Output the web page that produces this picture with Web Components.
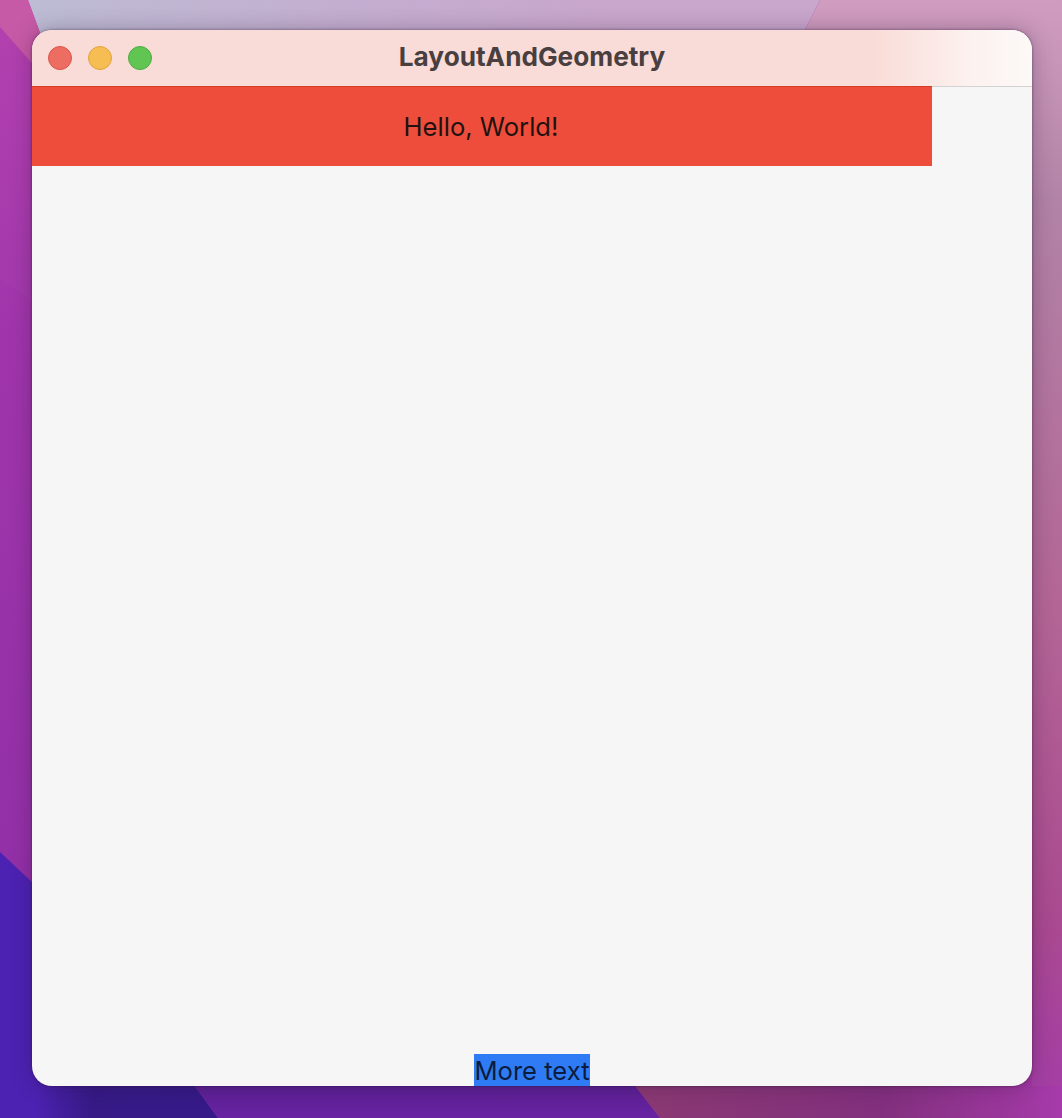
<!DOCTYPE html>
<html>
<head>
<meta charset="utf-8">
<title>LayoutAndGeometry</title>
<style>
  html, body { margin: 0; height: 100%; }
  body { overflow: hidden; background: #8a2ea5; }
</style>
</head>
<body>
<mac-desktop>
  <mac-window name="LayoutAndGeometry">
    <color-label color="#ee4d3b" ink="#1f1210" class="hello">Hello, World!</color-label>
    <color-label color="#2f7bf6" ink="#0c1c3c" class="more">More text</color-label>
  </mac-window>
</mac-desktop>
<script>
class MacDesktop extends HTMLElement {
  constructor() {
    super();
    this.attachShadow({ mode: 'open' });
    this.shadowRoot.innerHTML = `
    <style>
      :host {
        display: block;
        position: relative;
        width: 1062px;
        height: 1118px;
        padding: 30px 30px 32px 32px;
        box-sizing: border-box;
        overflow: hidden;
      }
      svg {
        position: absolute;
        inset: 0;
      }
      .front {
        position: relative;
        height: 100%;
      }
    </style>
    <svg width="1062" height="1118" viewBox="0 0 1062 1118" aria-hidden="true">
      <defs>
        <linearGradient id="sky" x1="0" y1="0" x2="1" y2="0">
          <stop offset="0" stop-color="#bdbcd4"/>
          <stop offset=".4" stop-color="#c4aed0"/>
          <stop offset=".75" stop-color="#c9a6cc"/>
          <stop offset="1" stop-color="#c9a6cc"/>
        </linearGradient>
        <linearGradient id="rose" x1="0" y1="0" x2="0" y2="1">
          <stop offset="0" stop-color="#d09dc0"/>
          <stop offset=".18" stop-color="#b283a6"/>
          <stop offset=".55" stop-color="#b36596"/>
          <stop offset=".82" stop-color="#aa4a90"/>
          <stop offset="1" stop-color="#a33ca8"/>
        </linearGradient>
        <linearGradient id="magenta" x1="0" y1="0" x2="0" y2="1">
          <stop offset="0" stop-color="#b33eae"/>
          <stop offset=".3" stop-color="#a035ab"/>
          <stop offset="1" stop-color="#8c2ea6"/>
        </linearGradient>
        <linearGradient id="indigo" x1="0" y1="0" x2="1" y2="0">
          <stop offset="0" stop-color="#4c22b2"/>
          <stop offset=".16" stop-color="#4c22b2"/>
          <stop offset=".42" stop-color="#371a86"/>
          <stop offset="1" stop-color="#361a88"/>
        </linearGradient>
        <linearGradient id="plum" x1="0" y1="0" x2="0" y2="1">
          <stop offset="0" stop-color="#511f88"/>
          <stop offset="1" stop-color="#6823a2"/>
        </linearGradient>
        <linearGradient id="wine" x1="0" y1="0" x2="1" y2="0">
          <stop offset="0" stop-color="#8c3a72"/>
          <stop offset=".6" stop-color="#82307e"/>
          <stop offset="1" stop-color="#a63aaa"/>
        </linearGradient>
      </defs>
      <rect width="1062" height="1118" fill="url(#magenta)"/>
      <polygon points="0,27 60,95 60,322 0,278" fill="#ffffff" opacity=".02"/>
      <polygon points="28,0 820,0 790,60 50,60" fill="url(#sky)"/>
      <polygon points="820,0 1062,0 1062,1118 1000,1118 1000,60 790,60" fill="url(#rose)"/>
      <polygon points="0,0 28,0 50,60 60,95 0,27" fill="#c75aa6"/>
      <polygon points="0,852 70,918 70,1118 0,1118" fill="#4c22b2"/>
      <polygon points="32,1060 176,1060 218,1118 0,1118 0,1086 32,1086" fill="url(#indigo)"/>
      <polygon points="176,1060 615,1060 660,1118 218,1118" fill="url(#plum)"/>
      <polygon points="615,1060 1032,1060 1032,1086 1062,1086 1062,1118 660,1118" fill="url(#wine)"/>
    </svg>
    <div class="front"><slot></slot></div>
    `;
  }
}

class MacWindow extends HTMLElement {
  constructor() {
    super();
    this.attachShadow({ mode: 'open' });
    this.shadowRoot.innerHTML = `
    <style>
      :host {
        display: flex;
        flex-direction: column;
        width: 1000px;
        height: 100%;
        background: #f6f6f6;
        border-radius: 20px;
        overflow: hidden;
        box-shadow: 0 0 3px rgba(40, 20, 50, .55), 0 0 22px rgba(30, 10, 40, .28);
      }
      .bar {
        flex: none;
        position: relative;
        display: flex;
        align-items: center;
        justify-content: center;
        height: 56px;
        margin-bottom: -1px;
        border-bottom: 1px solid #d2d2d2;
        background: linear-gradient(90deg, #f9dbd8 0, #f9dcd8 84%, #fbe8e5 90%, #fcf2f0 94%, #fcf9f7 100%);
      }
      .title {
        font: 700 26.2px/32px Inter, "Liberation Sans", sans-serif;
        color: #4a3f3f;
        margin-top: -2px;
      }
      traffic-lights {
        position: absolute;
        left: 16px;
        top: 16px;
      }
      .content {
        flex: 1;
        min-height: 0;
        display: flex;
        flex-direction: column;
        justify-content: space-between;
        align-items: flex-start;
      }
    </style>
    <div class="bar">
      <traffic-lights></traffic-lights>
      <span class="title">${this.getAttribute('name')}</span>
    </div>
    <div class="content"><slot></slot></div>
    `;
  }
}

class TrafficLights extends HTMLElement {
  constructor() {
    super();
    this.attachShadow({ mode: 'open' });
    this.shadowRoot.innerHTML = `
    <style>
      :host {
        display: flex;
        gap: 16px;
      }
      i {
        width: 24px;
        height: 24px;
        box-sizing: border-box;
        border-radius: 50%;
        border: 1px solid;
      }
      .close { background: #ee6d62; border-color: #d9544a; }
      .min { background: #f6bd52; border-color: #e0a33c; }
      .max { background: #61c553; border-color: #4fab42; }
    </style>
    <i class="close"></i><i class="min"></i><i class="max"></i>
    `;
  }
}

class ColorLabel extends HTMLElement {
  constructor() {
    super();
    this.attachShadow({ mode: 'open' });
    this.shadowRoot.innerHTML = `
    <style>
      :host {
        display: flex;
        align-items: center;
        justify-content: center;
        font: 400 25.6px/32px Inter, "Liberation Sans", sans-serif;
        background: ${this.getAttribute('color')};
        color: ${this.getAttribute('ink')};
        box-sizing: border-box;
      }
      :host(.hello) {
        position: relative;
        width: 900px;
        height: 80px;
        padding-right: 2px;
        border-top: 1px solid #d93a25;
      }
      :host(.more) {
        width: 116px;
        height: 32px;
        padding-top: 1px;
        align-self: center;
      }
    </style>
    <slot></slot>
    `;
  }
}

customElements.define('traffic-lights', TrafficLights);
customElements.define('color-label', ColorLabel);
customElements.define('mac-window', MacWindow);
customElements.define('mac-desktop', MacDesktop);
</script>
</body>
</html>
